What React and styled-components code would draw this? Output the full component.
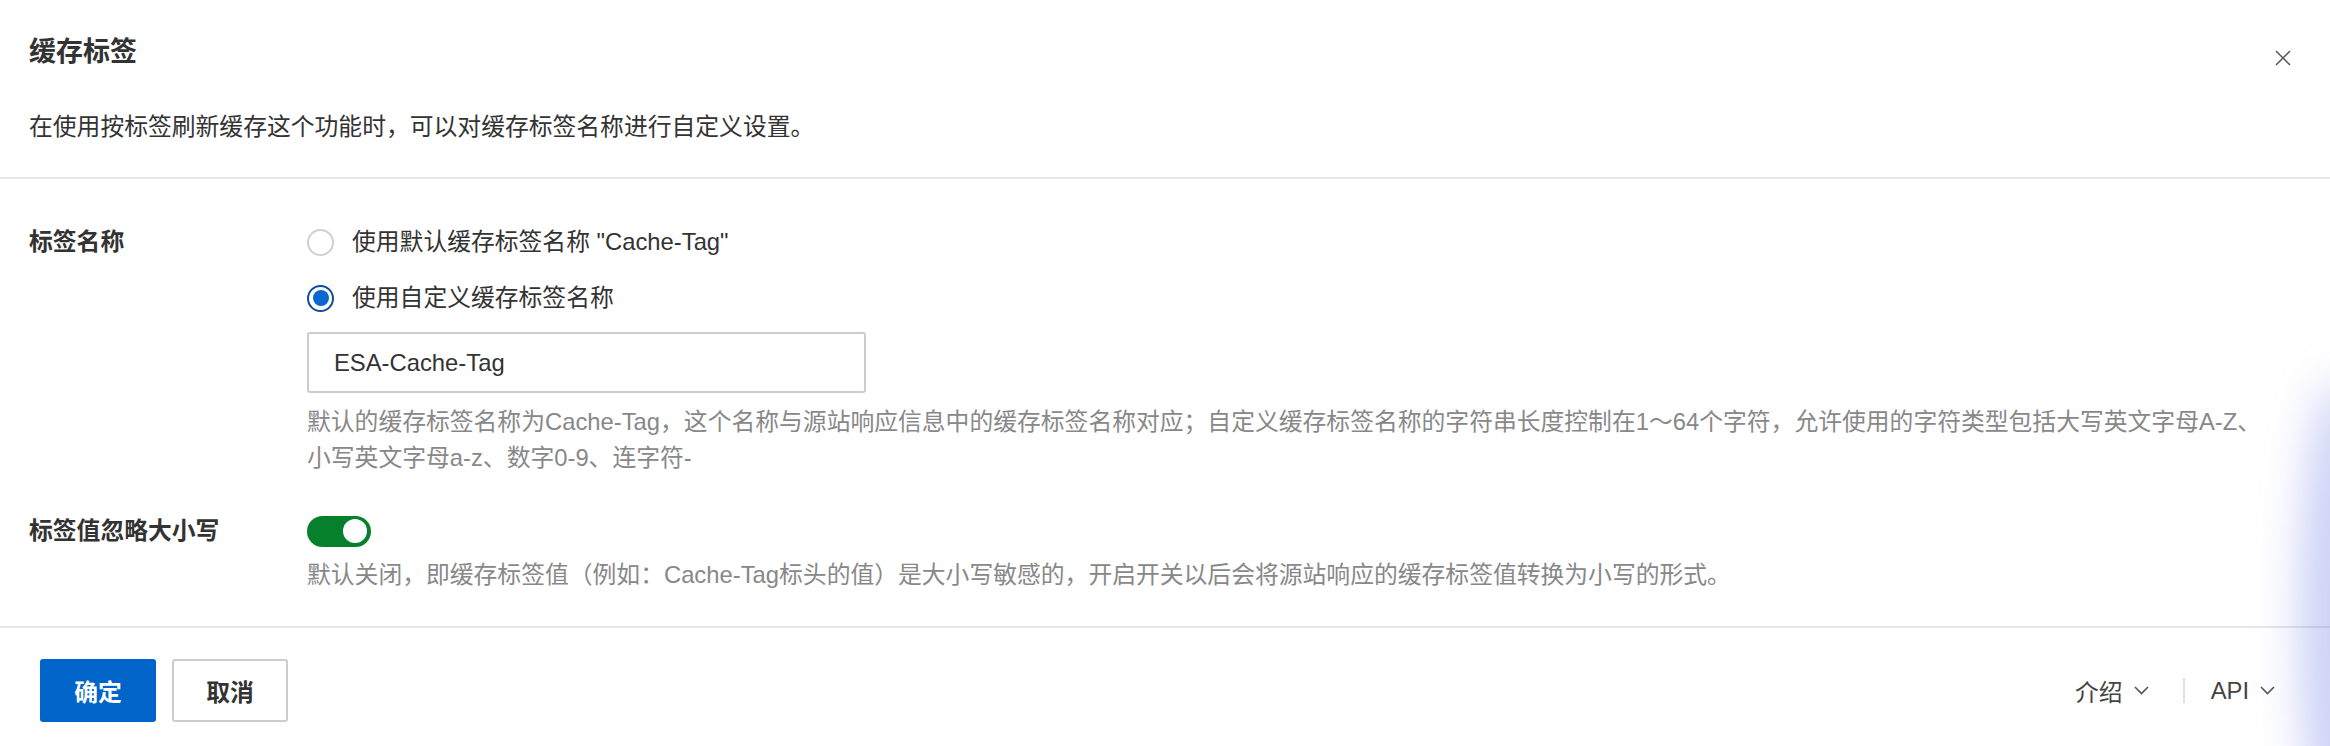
import React from 'react';
import styled, { createGlobalStyle } from 'styled-components';

const GlobalStyle = createGlobalStyle`
  * { box-sizing: border-box; }
  body {
    margin: 0;
    background: #fff;
    color: #333;
    font-family: 'Liberation Sans', 'Noto Sans CJK SC', sans-serif;
  }
`;

const CloseIcon = () => (
  <svg width="16" height="16" viewBox="0 0 16 16">
    <path d="M1 1 L15 15 M15 1 L1 15" stroke="#555" strokeWidth="1.5" fill="none" />
  </svg>
);

const Chevron = () => (
  <svg width="15" height="9" viewBox="0 0 15 9">
    <polyline points="1,1 7.5,7.5 14,1" stroke="#555" strokeWidth="1.6" fill="none" />
  </svg>
);

const App = () => {
  return (
    <>
      <GlobalStyle />
      <Dialog>
        <Header>
          <TitleRow>
            <Title>缓存标签</Title>
            <CloseButton>
              <CloseIcon />
            </CloseButton>
          </TitleRow>
          <Intro>在使用按标签刷新缓存这个功能时，可以对缓存标签名称进行自定义设置。</Intro>
        </Header>

        <Body>
          <FormRow>
            <Label>标签名称</Label>
            <Control>
              <RadioGroup>
                <RadioOption>
                  <RadioCircle />
                  <RadioText>使用默认缓存标签名称 "Cache-Tag"</RadioText>
                </RadioOption>
                <RadioOption>
                  <RadioCircle $checked />
                  <RadioText>使用自定义缓存标签名称</RadioText>
                </RadioOption>
              </RadioGroup>
              <TextInput defaultValue="ESA-Cache-Tag" />
              <Help>
                <HelpLine>
                  默认的缓存标签名称为Cache-Tag，这个名称与源站响应信息中的缓存标签名称对应；自定义缓存标签名称的字符串长度控制在1～64个字符，允许使用的字符类型包括大写英文字母A-Z、
                </HelpLine>
                <HelpLine>小写英文字母a-z、数字0-9、连字符-</HelpLine>
              </Help>
            </Control>
          </FormRow>

          <FormRow>
            <Label>标签值忽略大小写</Label>
            <Control>
              <SwitchBox>
                <Switch $on>
                  <SwitchKnob />
                </Switch>
              </SwitchBox>
              <Help $tight>
                <HelpLine>
                  默认关闭，即缓存标签值（例如：Cache-Tag标头的值）是大小写敏感的，开启开关以后会将源站响应的缓存标签值转换为小写的形式。
                </HelpLine>
              </Help>
            </Control>
          </FormRow>
        </Body>

        <Footer>
          <Actions>
            <Button $primary>确定</Button>
            <Button>取消</Button>
          </Actions>
          <Links>
            <LinkItem>
              介绍 <Chevron />
            </LinkItem>
            <Separator />
            <LinkItem>
              API <Chevron />
            </LinkItem>
          </Links>
        </Footer>
        <Glow />
      </Dialog>
    </>
  );
};

export default App;

const Dialog = styled.div`
  position: relative;
  width: 2330px;
  height: 746px;
  overflow: hidden;
  display: flex;
  flex-direction: column;
  background: #fff;
`;

const Header = styled.div`
  padding: 32px 39px 32px 29px;
  border-bottom: 2px solid #e6e6e6;
`;

const TitleRow = styled.div`
  display: flex;
  justify-content: space-between;
  align-items: flex-start;
`;

const Title = styled.h2`
  margin: 0;
  font-size: 27px;
  line-height: 40px;
  font-weight: 700;
  color: #333;
`;

const CloseButton = styled.button`
  display: flex;
  padding: 0;
  margin-top: 18px;
  border: none;
  background: none;
  cursor: pointer;
`;

const Intro = styled.div`
  margin-top: 37px;
  font-size: 23.8px;
  line-height: 36px;
  color: #333;
`;

const Body = styled.div`
  flex: 1;
  padding: 45px 30px 0 29px;
  display: flex;
  flex-direction: column;
  gap: 37px;
  border-bottom: 2px solid #e6e6e6;
`;

const FormRow = styled.div`
  display: flex;
`;

const Label = styled.div`
  width: 278px;
  flex-shrink: 0;
  font-size: 23.8px;
  line-height: 36px;
  font-weight: 600;
  color: #333;
`;

const Control = styled.div`
  flex: 1;
  display: flex;
  flex-direction: column;
`;

const RadioGroup = styled.div`
  display: flex;
  flex-direction: column;
  gap: 20px;
`;

const RadioOption = styled.label`
  display: flex;
  align-items: center;
  gap: 18px;
  height: 36px;
  cursor: pointer;
`;

const RadioCircle = styled.span`
  position: relative;
  width: 27px;
  height: 27px;
  border-radius: 50%;
  background: #fff;
  border: ${(p) => (p.$checked ? '2.5px solid #0f4c9a' : '2px solid #cfcfcf')};

  &::after {
    content: '';
    display: ${(p) => (p.$checked ? 'block' : 'none')};
    position: absolute;
    top: 50%;
    left: 50%;
    width: 16px;
    height: 16px;
    margin: -8px 0 0 -8px;
    border-radius: 50%;
    background: #0868cf;
  }
`;

const RadioText = styled.span`
  font-size: 23.8px;
  line-height: 36px;
  color: #333;
`;

const TextInput = styled.input`
  margin-top: 16px;
  width: 559px;
  height: 61px;
  padding: 0 25px;
  border: 2px solid #cccccc;
  border-radius: 3px;
  font-family: inherit;
  font-size: 23.8px;
  color: #333;
  outline: none;
`;

const Help = styled.div`
  margin-top: ${(p) => (p.$tight ? '8px' : '11px')};
  font-size: 23.8px;
  line-height: 36px;
  color: #888;
`;

const HelpLine = styled.div`
  white-space: nowrap;
`;

const SwitchBox = styled.div`
  height: 36px;
  display: flex;
  align-items: center;
`;

const Switch = styled.span`
  position: relative;
  display: flex;
  align-items: center;
  justify-content: ${(p) => (p.$on ? 'flex-end' : 'flex-start')};
  width: 64px;
  height: 31px;
  padding: 0 4px;
  border-radius: 16px;
  background: ${(p) => (p.$on ? '#07802c' : '#ccc')};
`;

const SwitchKnob = styled.span`
  width: 24px;
  height: 24px;
  border-radius: 50%;
  background: #fff;
`;

const Footer = styled.div`
  height: 118px;
  padding: 31px 55px 24px 40px;
  display: flex;
  justify-content: space-between;
  align-items: center;
`;

const Actions = styled.div`
  display: flex;
  gap: 16px;
`;

const Button = styled.button`
  width: 116px;
  height: 63px;
  border-radius: 3px;
  font-family: inherit;
  font-size: 23.8px;
  font-weight: 700;
  cursor: pointer;
  color: ${(p) => (p.$primary ? '#fff' : '#333')};
  background: ${(p) => (p.$primary ? '#0064c8' : '#fff')};
  border: ${(p) => (p.$primary ? 'none' : '2px solid #cccccc')};
`;

const Links = styled.div`
  display: flex;
  align-items: center;
  gap: 26px;
`;

const LinkItem = styled.span`
  display: flex;
  align-items: center;
  gap: 11px;
  font-size: 23.8px;
  color: #444;
  cursor: pointer;
`;

const Separator = styled.span`
  width: 2px;
  height: 25px;
  margin-left: 8px;
  background: #e0e0e0;
`;

const Glow = styled.div`
  position: absolute;
  right: -45px;
  top: 380px;
  width: 75px;
  height: 480px;
  border-radius: 50%;
  background: rgba(110, 120, 230, 0.35);
  filter: blur(22px);
  pointer-events: none;
`;
